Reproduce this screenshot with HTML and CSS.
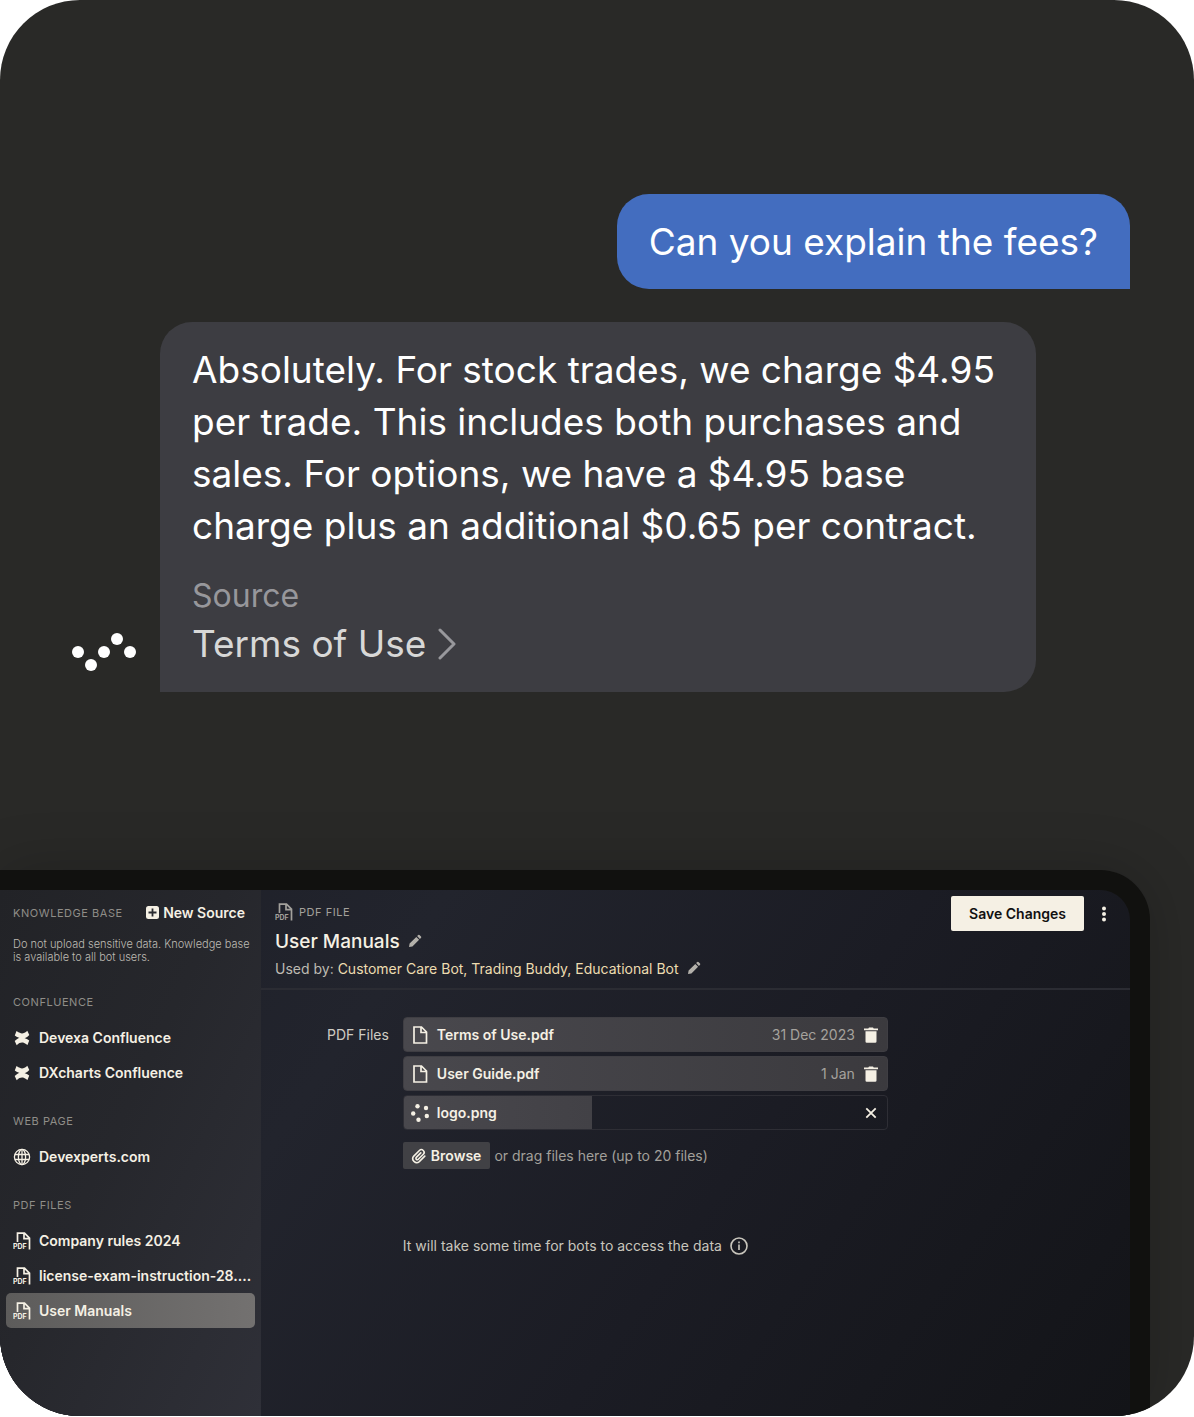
FILE: index.html
```html
<!DOCTYPE html>
<html lang="en">
<head>
  <meta charset="utf-8">
  <meta name="viewport" content="width=device-width, initial-scale=1">
  <title>Knowledge base</title>
  <link rel="stylesheet" href="styles.css">
</head>
<body>
  <svg class="sprite" aria-hidden="true">
    <symbol id="icon-pdf" viewBox="0 0 18 18">
      <path d="M4.500 10V1.200H11.500L16.500 6.200V17.500M11 1.500V6.700H16" fill="none" stroke="currentColor" stroke-width="1.700"/>
    </symbol>
    <symbol id="icon-file" viewBox="0 0 18 18">
      <path d="M3 1H10.500L15.500 6V17H3ZM10 1.300V6.500H15.200" fill="none" stroke="currentColor" stroke-width="1.700"/>
    </symbol>
    <symbol id="icon-confluence" viewBox="0 0 18 18">
      <path d="M3.500 2C6.500 3.800 7.500 4.400 9 4.400S12.500 3.700 14.300 1.800L16.300 6C13.800 8.600 11.500 9.600 9 9.600S4.300 8.200 1.800 6.600Z" fill="currentColor"/>
      <path d="M14.500 16C11.500 14.200 10.500 13.600 9 13.600S5.500 14.300 3.700 16.200L1.700 12C4.200 9.400 6.500 8.400 9 8.400S13.700 9.800 16.200 11.400Z" fill="currentColor"/>
    </symbol>
    <symbol id="icon-pencil" viewBox="0 0 14 14">
      <path d="M1 13L1.600 9.600L8.300 2.900L11.100 5.700L4.400 12.400ZM9.100 2.100L10.300 0.900Q10.900 0.500 11.500 1L13 2.500Q13.500 3.100 13.100 3.700L11.900 4.900Z" fill="currentColor"/>
    </symbol>
    <symbol id="icon-trash" viewBox="0 0 16 16">
      <path d="M1 1.600H5.300L6 0.500H10L10.700 1.600H15V3.200H1ZM2.500 4.200H13.500V14.500Q13.500 15.800 12.200 15.800H3.800Q2.500 15.800 2.500 14.500Z" fill="currentColor"/>
    </symbol>
  </svg>

  <div class="card">
    <section class="chat">
      <p class="bubble bubble-user">Can you explain the fees?</p>
      <div class="reply">
        <svg class="bot-logo" viewBox="0 0 64 38" aria-hidden="true">
          <g fill="#fff">
            <circle cx="6" cy="19" r="6"/>
            <circle cx="19" cy="32" r="6"/>
            <circle cx="32" cy="19" r="6"/>
            <circle cx="45" cy="6" r="6"/>
            <circle cx="58" cy="19" r="6"/>
          </g>
        </svg>
        <div class="bubble bubble-bot">
          <p>Absolutely. For stock trades, we charge $4.95 per trade. This includes both purchases and sales. For options, we have a $4.95 base charge plus an additional $0.65 per contract.</p>
          <p class="source">Source</p>
          <a class="source-link" href="#terms">Terms of Use
            <svg viewBox="0 0 18 32" aria-hidden="true"><path d="M2 2L16 16L2 30" fill="none" stroke="currentColor" stroke-width="3" stroke-linecap="round" stroke-linejoin="round"/></svg>
          </a>
        </div>
      </div>
    </section>

    <div class="device">
      <div class="screen">
        <aside class="sidebar">
          <div class="sidebar-head">
            <h2 class="caption">Knowledge base</h2>
            <button type="button" class="new-source">
              <svg viewBox="0 0 13 13" aria-hidden="true"><rect width="13" height="13" rx="2.500" fill="currentColor"/><path d="M6.500 2.500V10.500M2.500 6.500H10.500" stroke="#2a2b30" stroke-width="1.800"/></svg>
              New Source
            </button>
          </div>
          <p class="note">Do not upload sensitive data. Knowledge base is available to all bot users.</p>

          <nav class="sources">
            <div class="group">
              <h3 class="caption">Confluence</h3>
              <a class="item" href="#devexa"><svg class="icon"><use href="#icon-confluence"/></svg><span>Devexa Confluence</span></a>
              <a class="item" href="#dxcharts"><svg class="icon"><use href="#icon-confluence"/></svg><span>DXcharts Confluence</span></a>
            </div>
            <div class="group">
              <h3 class="caption">Web page</h3>
              <a class="item" href="#devexperts">
                <svg class="icon" viewBox="0 0 18 18"><g fill="none" stroke="currentColor" stroke-width="1.300"><circle cx="9" cy="9" r="7.600"/><ellipse cx="9" cy="9" rx="3.600" ry="7.600"/><path d="M2 6.500H16M2 11.500H16M9 1.400V16.600"/></g></svg>
                <span>Devexperts.com</span>
              </a>
            </div>
            <div class="group">
              <h3 class="caption">PDF files</h3>
              <a class="item" href="#rules"><svg class="icon"><use href="#icon-pdf"/><text x="0" y="17" class="pdf-mark">PDF</text></svg><span>Company rules 2024</span></a>
              <a class="item" href="#license"><svg class="icon"><use href="#icon-pdf"/><text x="0" y="17" class="pdf-mark">PDF</text></svg><span>license-exam-instruction-28....</span></a>
              <a class="item active" href="#manuals"><svg class="icon"><use href="#icon-pdf"/><text x="0" y="17" class="pdf-mark">PDF</text></svg><span>User Manuals</span></a>
            </div>
          </nav>
        </aside>

        <main class="main">
          <header class="main-head">
            <div class="head-info">
              <div class="type"><svg class="icon"><use href="#icon-pdf"/><text x="0" y="17" class="pdf-mark">PDF</text></svg><span class="caption">PDF file</span></div>
              <h1 class="title">User Manuals
                <button type="button" class="icon-btn" aria-label="Rename"><svg class="pencil"><use href="#icon-pencil"/></svg></button>
              </h1>
              <div class="used-by">
                <span>Used by: <a href="#bots">Customer Care Bot, Trading Buddy, Educational Bot</a></span>
                <button type="button" class="icon-btn" aria-label="Edit bots"><svg class="pencil"><use href="#icon-pencil"/></svg></button>
              </div>
            </div>
            <div class="head-actions">
              <button type="button" class="save">Save Changes</button>
              <button type="button" class="icon-btn" aria-label="More">
                <svg class="kebab" viewBox="0 0 4 16"><g fill="currentColor"><circle cx="2" cy="2.500" r="2"/><circle cx="2" cy="8" r="2"/><circle cx="2" cy="13.500" r="2"/></g></svg>
              </button>
            </div>
          </header>

          <div class="form">
            <span class="form-label" id="files-label">PDF Files</span>
            <div class="form-body">
              <ul class="files" aria-labelledby="files-label">
                <li class="file">
                  <svg class="icon"><use href="#icon-file"/></svg>
                  <span class="file-name">Terms of Use.pdf</span>
                  <span class="file-date">31 Dec 2023</span>
                  <button type="button" class="icon-btn" aria-label="Delete"><svg class="trash"><use href="#icon-trash"/></svg></button>
                </li>
                <li class="file">
                  <svg class="icon"><use href="#icon-file"/></svg>
                  <span class="file-name">User Guide.pdf</span>
                  <span class="file-date">1 Jan</span>
                  <button type="button" class="icon-btn" aria-label="Delete"><svg class="trash"><use href="#icon-trash"/></svg></button>
                </li>
                <li class="file uploading">
                  <svg class="icon" viewBox="0 0 18 18"><g fill="currentColor"><circle cx="6.500" cy="2.200" r="2.200"/><circle cx="15" cy="4" r="2.200"/><circle cx="15.800" cy="12" r="2.200"/><circle cx="7.500" cy="15.800" r="2.200"/><circle cx="2.200" cy="9.500" r="2.200"/></g></svg>
                  <span class="file-name">logo.png</span>
                  <button type="button" class="icon-btn" aria-label="Cancel upload">
                    <svg class="trash" viewBox="0 0 16 16"><path d="M3.300 3.300L12.700 12.700M12.700 3.300L3.300 12.700" stroke="currentColor" stroke-width="1.800"/></svg>
                  </button>
                </li>
              </ul>
              <div class="browse-row">
                <button type="button" class="browse">
                  <svg viewBox="0 0 16 16" aria-hidden="true"><path d="M13.800 7.600L8.300 13.100A3.900 3.900 0 0 1 2.800 7.600L8.400 2A2.700 2.700 0 0 1 12.300 5.800L7.300 10.800A1.300 1.300 0 0 1 5.300 8.900L9.800 4.400" transform="translate(0 .5)" fill="none" stroke="currentColor" stroke-width="1.600" stroke-linecap="round"/></svg>
                  Browse
                </button>
                <span>or drag files here (up to 20 files)</span>
              </div>
              <p class="hint">It will take some time for bots to access the data
                <svg class="icon" viewBox="0 0 18 18" aria-hidden="true"><circle cx="9" cy="9" r="8" fill="none" stroke="currentColor" stroke-width="1.600"/><path d="M9 7.500V13M9 4.500V6.200" stroke="currentColor" stroke-width="1.600"/></svg>
              </p>
            </div>
          </div>
        </main>
      </div>
    </div>
  </div>
</body>
</html>
```

FILE: styles.css
```css
* {
  box-sizing: border-box;
}

body {
  margin: 0;
  background: #fff;
  font-family: Inter, "Liberation Sans", sans-serif;
  font-size: 14px;
  color: #f5f0e4;
}

h1, h2, h3, p, ul {
  margin: 0;
  padding: 0;
}

a {
  color: inherit;
  text-decoration: none;
}

button {
  padding: 0;
  border: 0;
  background: none;
  color: inherit;
  font: inherit;
  cursor: pointer;
}

svg {
  display: block;
  flex: none;
}

.sprite {
  position: absolute;
  width: 0;
  height: 0;
}

.pdf-mark {
  font-size: 7px;
  font-weight: 700;
  fill: currentColor;
}

.icon {
  width: 18px;
  height: 18px;
}

.card {
  display: flex;
  flex-direction: column;
  min-height: calc(100vh - 1px);
  border-radius: 80px;
  background: #292927;
  overflow: hidden;
}

/* chat */
.chat {
  display: flex;
  flex-direction: column;
  gap: 33px;
  padding: 194px 64px 178px 72px;
  font-size: 37px;
  line-height: 52px;
  color: #fff;
}

.bubble {
  padding: 22px 32px;
  border-radius: 32px;
}

.bubble-user {
  align-self: flex-end;
  padding-bottom: 21px;
  border-bottom-right-radius: 0;
  background: #436dbf;
}

.reply {
  display: flex;
  align-items: flex-end;
  gap: 24px;
}

.bot-logo {
  width: 64px;
  height: 38px;
  margin-bottom: 21px;
}

.bubble-bot {
  max-width: 876px;
  border-bottom-left-radius: 0;
  background: #3d3d42;
}

.source {
  margin-top: 22px;
  font-size: 32px;
  line-height: 44px;
  color: #97979b;
}

.source-link {
  display: flex;
  align-items: center;
  gap: 12px;
  color: #d8d8d7;
}

.source-link svg {
  width: 18px;
  height: 32px;
  color: #98989c;
}

/* device */
.device {
  display: flex;
  flex: 1;
  margin-right: 44px;
  padding: 20px 20px 0 0;
  border-top-right-radius: 50px;
  background: #11110f;
  box-shadow: 0 0 60px rgba(0, 0, 0, 0.2);
}

.screen {
  display: flex;
  flex: 1;
  border-top-right-radius: 30px;
  background: linear-gradient(125deg, #1d1f27 0%, #22242d 30%, #1b1c24 62%, #131418 100%);
  overflow: hidden;
}

.caption {
  font-size: 11px;
  font-weight: 400;
  line-height: 16px;
  letter-spacing: 0.05em;
  text-transform: uppercase;
  color: #8f8d88;
}

.sidebar {
  width: 261px;
  background: linear-gradient(115deg, #222327, #26272c 45%, #2f3038);
}

.sidebar-head {
  display: flex;
  align-items: center;
  justify-content: space-between;
  height: 45px;
  padding: 0 16px 0 13px;
}

.new-source {
  display: flex;
  align-items: center;
  gap: 4px;
  font-weight: 600;
}

.new-source svg {
  width: 13px;
  height: 13px;
}

.note {
  padding: 3px 8px 0 13px;
  font-size: 11px;
  font-weight: 300;
  line-height: 13px;
  color: #bebbb3;
}

.sources {
  display: flex;
  flex-direction: column;
  gap: 23px;
  padding: 30px 6px;
}

.group .caption {
  margin: 0 7px 10px;
}

.item {
  display: flex;
  align-items: center;
  gap: 8px;
  height: 35px;
  padding: 0 7px;
  border-radius: 5px;
  font-weight: 600;
  white-space: nowrap;
}

.item.active {
  background: linear-gradient(90deg, #5d5c5b, #737170);
}

.main {
  flex: 1;
}

.main-head {
  display: flex;
  justify-content: space-between;
  height: 100px;
  padding: 6px 24px 0 14px;
  border-bottom: 2px solid #2b2c33;
}

.type {
  display: flex;
  align-items: center;
  gap: 6px;
  height: 32px;
  color: #a3a19c;
}

.type .caption {
  color: #a3a19c;
}

.title {
  display: flex;
  align-items: center;
  gap: 8px;
  height: 26px;
  font-size: 19px;
  font-weight: 500;
}

.used-by {
  display: flex;
  align-items: center;
  gap: 8px;
  height: 28px;
  color: #bdbab2;
}

.used-by a {
  color: #eddcb0;
}

.pencil {
  width: 14px;
  height: 14px;
  color: #b3b0aa;
}

.head-actions {
  display: flex;
  align-items: center;
  gap: 18px;
  height: 35px;
}

.save {
  height: 35px;
  padding: 0 18px;
  border-radius: 2px;
  background: #f5f0e4;
  font-weight: 600;
  color: #111;
}

.kebab {
  width: 4px;
  height: 16px;
}

.form {
  display: flex;
  gap: 14px;
  padding: 27px 24px 27px 66px;
}

.form-label {
  line-height: 36px;
  color: #cfccc3;
}

.form-body {
  flex: 1;
  max-width: 485px;
}

.files {
  display: flex;
  flex-direction: column;
  gap: 4px;
  list-style: none;
}

.file {
  display: flex;
  align-items: center;
  gap: 8px;
  height: 35px;
  padding: 0 8px 0 7px;
  border: 1px solid #3f3e43;
  border-radius: 4px;
  background: linear-gradient(90deg, #49484d, #3b3a3e);
}

.file.uploading {
  border-color: #2e2e35;
  background: linear-gradient(90deg, #49484d, #424146) no-repeat left / 39% 100%;
}

.file-name {
  flex: 1;
  font-weight: 600;
}

.file-date {
  color: #a5a29d;
}

.trash {
  width: 16px;
  height: 16px;
}

.browse-row {
  display: flex;
  align-items: center;
  gap: 4px;
  margin-top: 12px;
  color: #a3a09b;
}

.browse {
  display: flex;
  align-items: center;
  gap: 4px;
  height: 27px;
  padding: 0 9px 0 8px;
  border-radius: 2px;
  background: #414145;
  font-weight: 600;
  color: #f5f0e4;
}

.browse svg {
  width: 16px;
  height: 16px;
}

.hint {
  display: flex;
  align-items: center;
  gap: 8px;
  margin-top: 66px;
  line-height: 22px;
  color: #c9c6bd;
}
```
